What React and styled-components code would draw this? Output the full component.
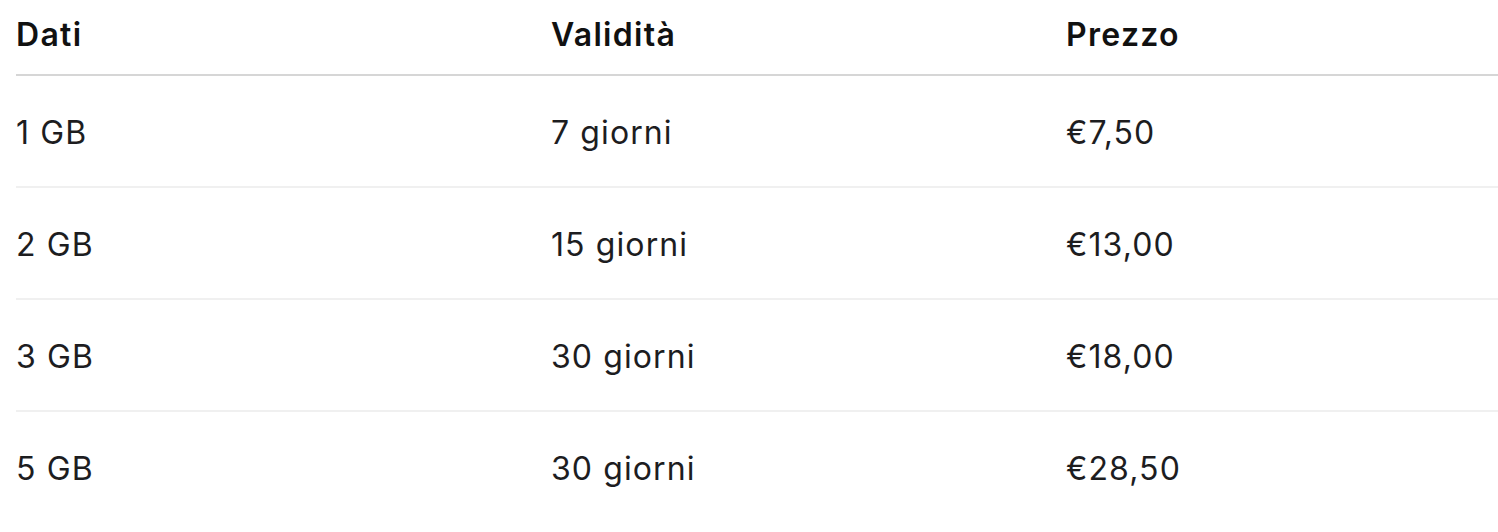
import React from "react";
import styled, { createGlobalStyle } from "styled-components";

const GlobalStyle = createGlobalStyle`
  body {
    margin: 0;
    background: #fff;
    font-family: Inter, "Noto Sans", "Liberation Sans", sans-serif;
    color: #1d1d1f;
  }
`;

const Wrapper = styled.div`
  padding-left: 16px;
`;

const Table = styled.div`
  display: grid;
  grid-template-columns: 535px 515px 1fr;
`;

const HeadCell = styled.div`
  font-size: 32px;
  font-weight: 600;
  letter-spacing: 1.3px;
  line-height: 48px;
  color: #111;
  padding: 11px 0 15px;
  border-bottom: 2px solid #d6d6d6;
`;

const Cell = styled.div`
  font-size: 32px;
  font-weight: 400;
  letter-spacing: 1.1px;
  line-height: 48px;
  padding: 33px 0 29px;
  border-bottom: ${(p) => (p.$last ? "none" : "2px solid #f0f0f0")};
`;

const rows = [
  ["1 GB", "7 giorni", "€7,50"],
  ["2 GB", "15 giorni", "€13,00"],
  ["3 GB", "30 giorni", "€18,00"],
  ["5 GB", "30 giorni", "€28,50"],
];

const App = () => {
  return (
    <Wrapper>
      <GlobalStyle />
      <Table>
        <HeadCell>Dati</HeadCell>
        <HeadCell>Validità</HeadCell>
        <HeadCell>Prezzo</HeadCell>
        {rows.map((row, i) =>
          row.map((text, j) => (
            <Cell key={`${i}-${j}`} $last={i === rows.length - 1}>
              {text}
            </Cell>
          ))
        )}
      </Table>
    </Wrapper>
  );
};

export default App;
